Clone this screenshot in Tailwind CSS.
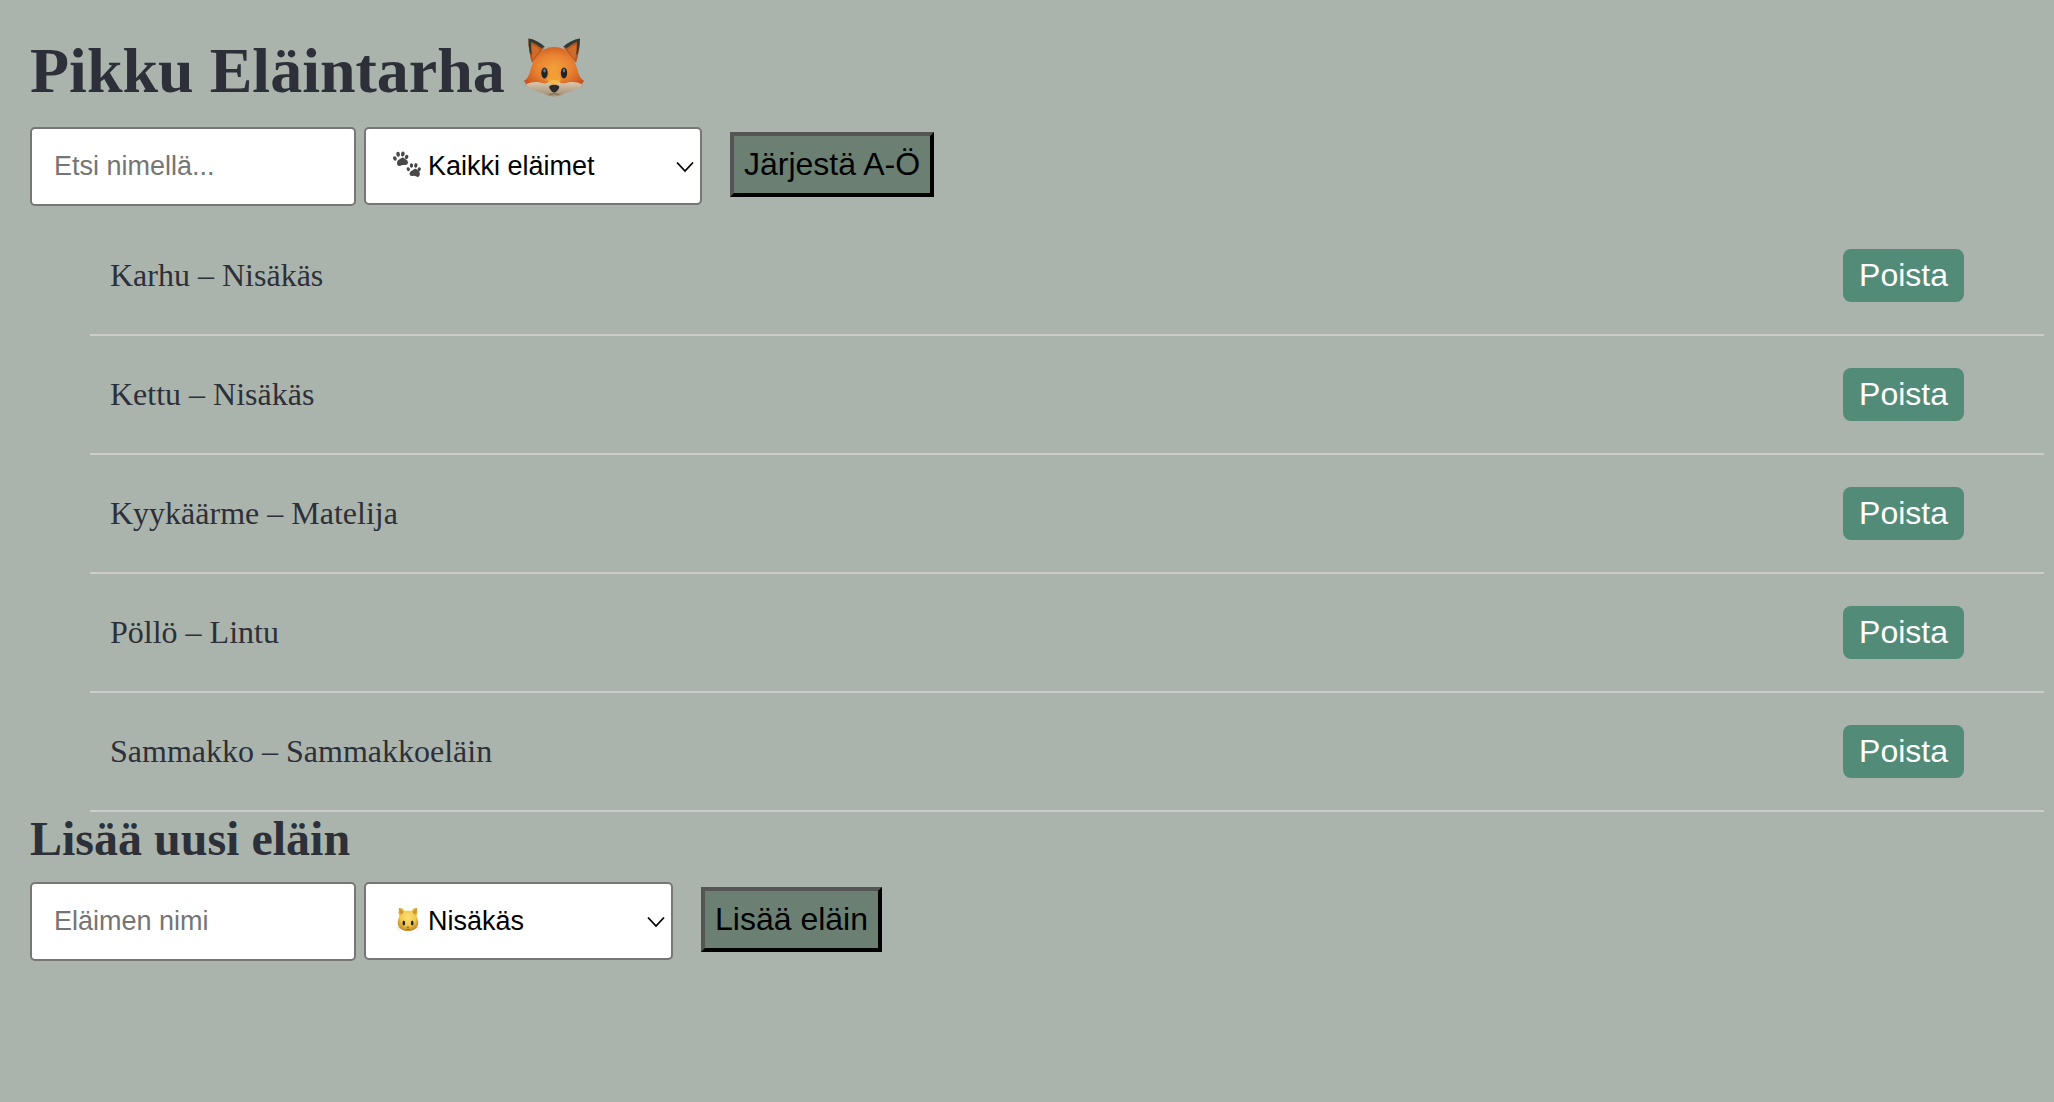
<!DOCTYPE html>
<html lang="fi">
<head>
<meta charset="utf-8">
<meta name="viewport" content="width=device-width, initial-scale=1">
<title>Pikku Eläintarha</title>
<script src="https://cdn.jsdelivr.net/npm/@tailwindcss/browser@4"></script>
</head>
<body class="min-h-screen bg-[#aab4ad] pt-8 pl-[30px] pr-[10px] font-['Liberation_Serif',serif] text-[32px] text-[#2d3038]">
<main>
  <h1 class="mb-[17px] flex items-start gap-[18px] text-[64px] leading-[78px] font-bold">
    Pikku Eläintarha
    <svg class="mt-[5px] h-[60px] w-[62px]" viewBox="0 0 62 60" role="img" aria-label="Kettu">
      <defs>
        <radialGradient id="fur" cx="50%" cy="48%" r="58%">
          <stop offset="0" stop-color="#f2a03a"/><stop offset=".5" stop-color="#e98332"/><stop offset="1" stop-color="#c9501a"/>
        </radialGradient>
        <linearGradient id="muzzle" x1="0" y1="0" x2="0" y2="1">
          <stop offset="0" stop-color="#e0cfb8"/><stop offset="1" stop-color="#a08c70"/>
        </linearGradient>
        <linearGradient id="bridge" x1="0" y1="0" x2="0" y2="1">
          <stop offset="0" stop-color="#f4a836" stop-opacity="0"/><stop offset="1" stop-color="#f8b638"/>
        </linearGradient>
      </defs>
      <path d="M5.500 1.500Q14 3 21 11L9 26Q5 14 5.500 1.500ZM57 1.500Q48 3 41 11L53 26Q57 14 57 1.500Z" fill="#b9571f"/>
      <path d="M5.500 1.500Q15 3 22 10L18 11Q12 6 8 5Q7.500 11 9 18L7 16Q5 8 5.500 1.500ZM57 1.500Q47 3 40 10L44 11Q50 6 54 5Q54.500 11 53 18L55 16Q57 8 57 1.500Z" fill="#303b34"/>
      <path d="M9 8Q14 9 17 13L10 23Q8 15 9 8ZM53 8Q48 9 45 13L52 23Q54 15 53 8Z" fill="#cf6c2b"/>
      <path d="M31 10Q42 10 48 19Q53 26 55 35Q57 42 61.500 44Q58 46 60 48Q52 53 45 53H17Q9 53 2 48Q4 46 .5 44Q5 42 7 35Q9 26 14 19Q20 10 31 10Z" fill="url(#fur)"/>
      <path d="M2 47.500Q12 43.500 19 46Q24 47.500 27 44L31 43L35 44Q38 47.500 43 46Q50 43.500 60 47.500Q54 54 42 56Q37 59.500 31 59.500Q25 59.500 20 56Q8 54 2 47.500Z" fill="url(#muzzle)"/>
      <path d="M28 29H34L38 43Q34 48 31 49Q28 48 24 43Z" fill="url(#bridge)"/>
      <ellipse cx="21.500" cy="36" rx="3.200" ry="5.400" fill="#1d2528"/>
      <ellipse cx="41" cy="36" rx="3.200" ry="5.400" fill="#1d2528"/>
      <ellipse cx="21.500" cy="33.500" rx="1.200" ry="1.900" fill="#68777a"/>
      <ellipse cx="41" cy="33.500" rx="1.200" ry="1.900" fill="#68777a"/>
      <path d="M26.500 49Q31 46.500 36 49Q37 51 34 54Q31 57 28.500 54Q25.500 51 26.500 49Z" fill="#2a2a28"/>
      <path d="M26 57.500Q31 56 36 57.500" fill="none" stroke="#7b674f" stroke-width="1"/>
    </svg>
  </h1>

  <section aria-label="Eläimet">
    <div class="flex items-start">
      <input type="text" aria-label="Etsi nimellä" placeholder="Etsi nimellä..." class="h-[79px] w-[326px] rounded-[5px] border-2 border-[#767676] bg-white px-[22px] font-['Liberation_Sans',sans-serif] text-[27px] text-black placeholder:text-[#757575]">
      <div class="relative ml-2">
        <select aria-label="Laji" class="h-[78px] w-[338px] appearance-none rounded-[5px] border-2 border-[#767676] bg-white pl-[62px] font-['Liberation_Sans',sans-serif] text-[27px] text-black">
          <option>Kaikki eläimet</option><option>Nisäkäs</option><option>Lintu</option><option>Matelija</option><option>Sammakkoeläin</option>
        </select>
        <svg class="pointer-events-none absolute top-[24px] left-[29px] h-[27px] w-[28px]" viewBox="0 0 28 27" fill="#484848" aria-hidden="true">
          <path d="M4 12Q4 9 7 8Q10 5 12 8Q15 9 15 12Q14.500 14.500 11 14Q9 13.500 7 15Q4 15.500 4 12Z"/>
          <ellipse cx="1.900" cy="7.500" rx="1.700" ry="2.200" transform="rotate(-25 1.900 7.500)"/>
          <ellipse cx="5.100" cy="3.300" rx="1.800" ry="2.500" transform="rotate(-8 5.100 3.300)"/>
          <ellipse cx="9.800" cy="3" rx="1.800" ry="2.500" transform="rotate(10 9.800 3)"/>
          <ellipse cx="13.600" cy="6" rx="1.700" ry="2.200" transform="rotate(25 13.600 6)"/>
          <g transform="translate(13.500 11.500) rotate(3 7 7) scale(.93)">
            <path d="M3.500 12Q4 9 7 8Q10 5 12 8Q15 9 14.500 13Q14 16 11 15Q9 14 7 14.500Q3.500 15 3.500 12Z"/>
            <ellipse cx="1.900" cy="7.500" rx="1.700" ry="2.200" transform="rotate(-25 1.900 7.500)"/>
            <ellipse cx="5.100" cy="3.300" rx="1.800" ry="2.500" transform="rotate(-8 5.100 3.300)"/>
            <ellipse cx="9.800" cy="3" rx="1.800" ry="2.500" transform="rotate(10 9.800 3)"/>
            <ellipse cx="13.600" cy="7" rx="1.700" ry="2.200" transform="rotate(20 13.600 7)"/>
          </g>
        </svg>
        <svg class="pointer-events-none absolute top-[34px] right-[8px] h-[12px] w-[18px]" viewBox="0 0 18 12" fill="none" stroke="#000" stroke-width="1.800" aria-hidden="true"><path d="M1 1.500L9 10L17 1.500"/></svg>
      </div>
      <button type="button" class="mt-[5px] ml-7 h-[65px] border-4 border-t-[#555] border-r-black border-b-black border-l-[#555] bg-[#6b8073] px-[10px] pb-0.5 font-['Liberation_Sans',sans-serif] text-black">Järjestä A-Ö</button>
    </div>

    <ul class="mt-[11px] ml-[60px]">
      <li class="flex items-center justify-between border-b-2 border-[#ccc] py-8 pr-20 pl-5 leading-[37px]">Karhu – Nisäkäs <button type="button" class="rounded-lg bg-[#528b77] px-4 py-2 font-['Liberation_Sans',sans-serif] text-white">Poista</button></li>
      <li class="flex items-center justify-between border-b-2 border-[#ccc] py-8 pr-20 pl-5 leading-[37px]">Kettu – Nisäkäs <button type="button" class="rounded-lg bg-[#528b77] px-4 py-2 font-['Liberation_Sans',sans-serif] text-white">Poista</button></li>
      <li class="flex items-center justify-between border-b-2 border-[#ccc] py-8 pr-20 pl-5 leading-[37px]">Kyykäärme – Matelija <button type="button" class="rounded-lg bg-[#528b77] px-4 py-2 font-['Liberation_Sans',sans-serif] text-white">Poista</button></li>
      <li class="flex items-center justify-between border-b-2 border-[#ccc] py-8 pr-20 pl-5 leading-[37px]">Pöllö – Lintu <button type="button" class="rounded-lg bg-[#528b77] px-4 py-2 font-['Liberation_Sans',sans-serif] text-white">Poista</button></li>
      <li class="flex items-center justify-between border-b-2 border-[#ccc] py-8 pr-20 pl-5 leading-[37px]">Sammakko – Sammakkoeläin <button type="button" class="rounded-lg bg-[#528b77] px-4 py-2 font-['Liberation_Sans',sans-serif] text-white">Poista</button></li>
    </ul>
  </section>

  <section>
    <h2 class="mb-4 text-[48px] leading-[54px] font-bold">Lisää uusi eläin</h2>
    <form class="flex items-start">
      <input type="text" aria-label="Eläimen nimi" placeholder="Eläimen nimi" class="h-[79px] w-[326px] rounded-[5px] border-2 border-[#767676] bg-white px-[22px] font-['Liberation_Sans',sans-serif] text-[27px] text-black placeholder:text-[#757575]">
      <div class="relative ml-2">
        <select aria-label="Eläimen laji" class="h-[78px] w-[309px] appearance-none rounded-[5px] border-2 border-[#767676] bg-white pl-[62px] font-['Liberation_Sans',sans-serif] text-[27px] text-black">
          <option>Nisäkäs</option><option>Lintu</option><option>Matelija</option><option>Sammakkoeläin</option>
        </select>
        <svg class="pointer-events-none absolute top-[25px] left-[32px] h-[26px] w-[24px]" viewBox="0 0 24 26" aria-hidden="true">
          <defs>
            <radialGradient id="cat" cx="50%" cy="40%" r="60%">
              <stop offset="0" stop-color="#fbdf72"/><stop offset=".6" stop-color="#f2c94e"/><stop offset="1" stop-color="#c08a28"/>
            </radialGradient>
          </defs>
          <path d="M3 1Q7 1 9 4Q12 3 15 4Q17 1 21 1Q22 6 20.500 9Q23 14 22 18Q20 24 12 24Q4 24 2 18Q1 14 3.500 9Q2 6 3 1Z" fill="url(#cat)"/>
          <path d="M4.200 3Q6 3 7.500 5L4.800 8Q4 5 4.200 3ZM19.800 3Q18 3 16.500 5L19.200 8Q20 5 19.800 3Z" fill="#c78a33"/>
          <ellipse cx="7.800" cy="16" rx="1.300" ry="2.500" fill="#252018"/><ellipse cx="16.200" cy="16" rx="1.300" ry="2.500" fill="#252018"/>
          <path d="M10.800 19.800H13.200L12 21.500Z" fill="#80551f"/>
          <path d="M10 22.800Q12 21.500 14 22.800" fill="none" stroke="#80551f" stroke-width=".6"/>
          <path d="M5 21L1.500 24M19 21L22.500 24M4 20L.5 21M20 20L23.500 21" stroke="#c9b994" stroke-width=".5"/>
        </svg>
        <svg class="pointer-events-none absolute top-[34px] right-[8px] h-[12px] w-[18px]" viewBox="0 0 18 12" fill="none" stroke="#000" stroke-width="1.800" aria-hidden="true"><path d="M1 1.500L9 10L17 1.500"/></svg>
      </div>
      <button type="submit" class="mt-[5px] ml-7 h-[65px] border-4 border-t-[#555] border-r-black border-b-black border-l-[#555] bg-[#6b8073] px-[10px] pb-0.5 font-['Liberation_Sans',sans-serif] text-black">Lisää eläin</button>
    </form>
  </section>
</main>
</body>
</html>
